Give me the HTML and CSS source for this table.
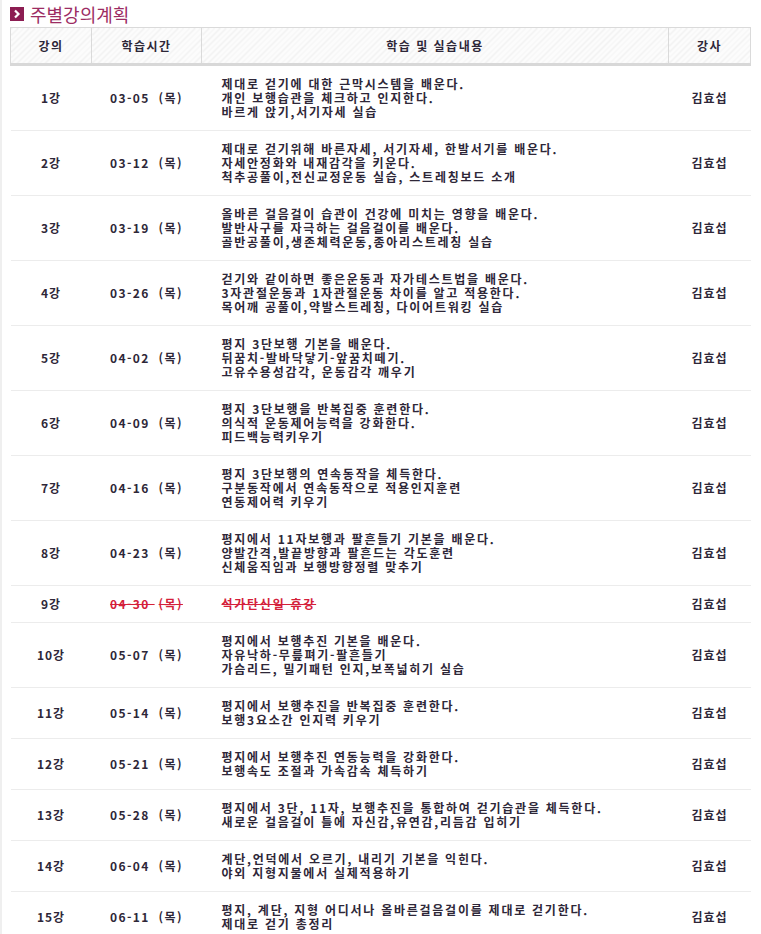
FILE: index.html
```html
<!DOCTYPE html>
<html lang="ko">
<head>
<meta charset="utf-8">
<title>주별강의계획</title>
<link rel="stylesheet" href="styles.css">
</head>
<body>
<div class="page">
  <h2 class="title">
    <span class="title-icon"><svg width="14" height="14" viewBox="0 0 14 14"><rect width="14" height="14" fill="#8c1d52"/><path d="M5 3.5 L8.5 7 L5 10.5" fill="none" stroke="#fff" stroke-width="2.2"/></svg></span>
    주별강의계획
  </h2>
  <table class="plan">
    <colgroup>
      <col class="c-no"><col class="c-date"><col class="c-body"><col class="c-teacher">
    </colgroup>
    <thead>
      <tr><th>강의</th><th>학습시간</th><th>학습 및 실습내용</th><th>강사</th></tr>
    </thead>
    <tbody>
      <tr><td>1강</td><td class="date">03-05 <span class="day">(목)</span></td><td class="desc">제대로 걷기에 대한 근막시스템을 배운다.<br>개인 보행습관을 체크하고 인지한다.<br>바르게 앉기,서기자세 실습</td><td>김효섭</td></tr>
      <tr><td>2강</td><td class="date">03-12 <span class="day">(목)</span></td><td class="desc">제대로 걷기위해 바른자세, 서기자세, 한발서기를 배운다.<br>자세안정화와 내재감각을 키운다.<br>척추공풀이,전신교정운동 실습, 스트레칭보드 소개</td><td>김효섭</td></tr>
      <tr><td>3강</td><td class="date">03-19 <span class="day">(목)</span></td><td class="desc">올바른 걸음걸이 습관이 건강에 미치는 영향을 배운다.<br>발반사구를 자극하는 걸음걸이를 배운다.<br>골반공풀이,생존체력운동,종아리스트레칭 실습</td><td>김효섭</td></tr>
      <tr><td>4강</td><td class="date">03-26 <span class="day">(목)</span></td><td class="desc">걷기와 같이하면 좋은운동과 자가테스트법을 배운다.<br>3자관절운동과 1자관절운동 차이를 알고 적용한다.<br>목어깨 공풀이,약발스트레칭, 다이어트워킹 실습</td><td>김효섭</td></tr>
      <tr><td>5강</td><td class="date">04-02 <span class="day">(목)</span></td><td class="desc">평지 3단보행 기본을 배운다.<br>뒤꿈치-발바닥닿기-앞꿈치떼기.<br>고유수용성감각, 운동감각 깨우기</td><td>김효섭</td></tr>
      <tr><td>6강</td><td class="date">04-09 <span class="day">(목)</span></td><td class="desc">평지 3단보행을 반복집중 훈련한다.<br>의식적 운동제어능력을 강화한다.<br>피드백능력키우기</td><td>김효섭</td></tr>
      <tr><td>7강</td><td class="date">04-16 <span class="day">(목)</span></td><td class="desc">평지 3단보행의 연속동작을 체득한다.<br>구분동작에서 연속동작으로 적용인지훈련<br>연동제어력 키우기</td><td>김효섭</td></tr>
      <tr><td>8강</td><td class="date">04-23 <span class="day">(목)</span></td><td class="desc">평지에서 11자보행과 팔흔들기 기본을 배운다.<br>양발간격,발끝방향과 팔흔드는 각도훈련<br>신체움직임과 보행방향정렬 맞추기</td><td>김효섭</td></tr>
      <tr class="off"><td>9강</td><td class="date"><span class="strike">04-30 <span class="day">(목)</span></span></td><td class="desc"><span class="strike">석가탄신일 휴강</span></td><td>김효섭</td></tr>
      <tr><td>10강</td><td class="date">05-07 <span class="day">(목)</span></td><td class="desc">평지에서 보행추진 기본을 배운다.<br>자유낙하-무릎펴기-팔흔들기<br>가슴리드, 밀기패턴 인지,보폭넓히기 실습</td><td>김효섭</td></tr>
      <tr><td>11강</td><td class="date">05-14 <span class="day">(목)</span></td><td class="desc">평지에서 보행추진을 반복집중 훈련한다.<br>보행3요소간 인지력 키우기</td><td>김효섭</td></tr>
      <tr><td>12강</td><td class="date">05-21 <span class="day">(목)</span></td><td class="desc">평지에서 보행추진 연동능력을 강화한다.<br>보행속도 조절과 가속감속 체득하기</td><td>김효섭</td></tr>
      <tr><td>13강</td><td class="date">05-28 <span class="day">(목)</span></td><td class="desc">평지에서 3단, 11자, 보행추진을 통합하여 걷기습관을 체득한다.<br>새로운 걸음걸이 틀에 자신감,유연감,리듬감 입히기</td><td>김효섭</td></tr>
      <tr><td>14강</td><td class="date">06-04 <span class="day">(목)</span></td><td class="desc">계단,언덕에서 오르기, 내리기 기본을 익힌다.<br>야외 지형지물에서 실제적용하기</td><td>김효섭</td></tr>
      <tr><td>15강</td><td class="date">06-11 <span class="day">(목)</span></td><td class="desc">평지, 계단, 지형 어디서나 올바른걸음걸이를 제대로 걷기한다.<br>제대로 걷기 총정리</td><td>김효섭</td></tr>
    </tbody>
  </table>
</div>
</body>
</html>
```

FILE: styles.css
```css
html, body {
  margin: 0;
  padding: 0;
  background: #fff;
}
body {
  border-left: 2px solid #efefef;
  min-height: 934px;
  box-sizing: border-box;
  font-family: "Noto Sans CJK KR", "Noto Sans", sans-serif;
  color: #2e2738;
}
.page {
  padding-left: 8px;
  width: 740px;
}
.title {
  margin: 0;
  height: 27px;
  display: flex;
  align-items: center;
  gap: 6px;
  font-size: 18px;
  font-weight: 400;
  color: #9c2c63;
  line-height: 27px;
  padding-top: 1px;
  box-sizing: border-box;
}
.title-icon {
  display: flex;
  width: 14px;
  height: 14px;
}
.plan {
  width: 740px;
  border-collapse: collapse;
  table-layout: fixed;
  font-size: 12px;
  line-height: 14px;
  letter-spacing: 1px;
}
.c-no { width: 81px; }
.c-date { width: 110px; }
.c-body { width: 467px; }
.c-teacher { width: 82px; }
.plan th {
  height: 35px;
  padding: 0;
  border: 1px solid #dadada;
  border-bottom: 3px solid #d8d8d8;
  background: repeating-linear-gradient(135deg, #f1f1f1 0 1px, #fcfcfc 1px 4px);
  font-weight: 700;
  color: #2e2738;
  text-align: center;
  letter-spacing: 1.5px;
}
.plan td {
  padding: 11px 0;
  border-bottom: 1px solid #ececec;
  text-align: center;
  vertical-align: middle;
  font-weight: 700;
  white-space: nowrap;
}
.plan td.date {
  letter-spacing: 1.4px;
}
.day {
  margin-left: 4px;
}
.plan td.desc {
  text-align: left;
  padding-left: 20px;
  letter-spacing: 1.75px;
}
.off .strike {
  color: #d4203a;
  text-decoration: line-through;
  text-decoration-color: #d4203a;
}
```
